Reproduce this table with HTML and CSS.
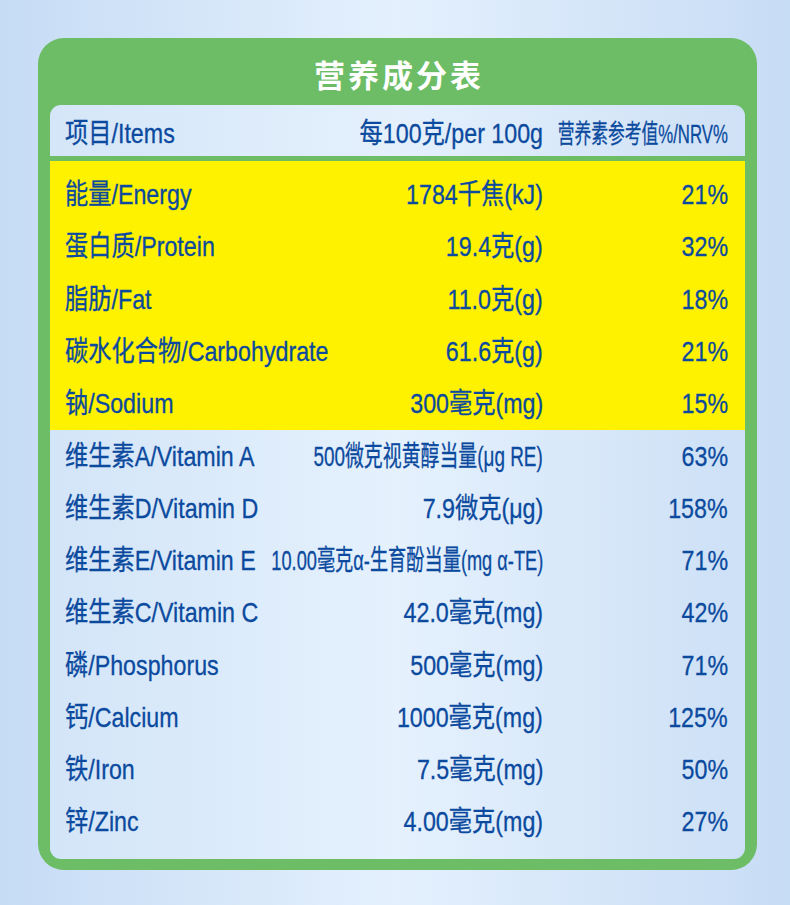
FILE: index.html
```html
<!DOCTYPE html>
<html lang="zh">
<head>
<meta charset="utf-8">
<title>营养成分表</title>
<link rel="stylesheet" href="styles.css">
</head>
<body>
<div class="page">
  <div class="card">
    <div class="title">营养成分表</div>
    <div class="head row">
      <span class="c name">项目/Items</span>
      <span class="c val">每100克/per 100g</span>
      <span class="c nrv narrowhead">营养素参考值%/NRV%</span>
    </div>
    <div class="yellow">
      <div class="row"><span class="c name">能量/Energy</span><span class="c val">1784千焦(kJ)</span><span class="c nrv">21%</span></div>
      <div class="row"><span class="c name">蛋白质/Protein</span><span class="c val">19.4克(g)</span><span class="c nrv">32%</span></div>
      <div class="row"><span class="c name">脂肪/Fat</span><span class="c val">11.0克(g)</span><span class="c nrv">18%</span></div>
      <div class="row"><span class="c name">碳水化合物/Carbohydrate</span><span class="c val">61.6克(g)</span><span class="c nrv">21%</span></div>
      <div class="row"><span class="c name">钠/Sodium</span><span class="c val">300毫克(mg)</span><span class="c nrv">15%</span></div>
    </div>
    <div class="blue">
      <div class="row"><span class="c name">维生素A/Vitamin A</span><span class="c val tight">500微克视黄醇当量(μg RE)</span><span class="c nrv">63%</span></div>
      <div class="row"><span class="c name">维生素D/Vitamin D</span><span class="c val">7.9微克(μg)</span><span class="c nrv">158%</span></div>
      <div class="row"><span class="c name">维生素E/Vitamin E</span><span class="c val tighter">10.00毫克α-生育酚当量(mg α-TE)</span><span class="c nrv">71%</span></div>
      <div class="row"><span class="c name">维生素C/Vitamin C</span><span class="c val">42.0毫克(mg)</span><span class="c nrv">42%</span></div>
      <div class="row"><span class="c name">磷/Phosphorus</span><span class="c val">500毫克(mg)</span><span class="c nrv">71%</span></div>
      <div class="row"><span class="c name">钙/Calcium</span><span class="c val">1000毫克(mg)</span><span class="c nrv">125%</span></div>
      <div class="row"><span class="c name">铁/Iron</span><span class="c val">7.5毫克(mg)</span><span class="c nrv">50%</span></div>
      <div class="row"><span class="c name">锌/Zinc</span><span class="c val">4.00毫克(mg)</span><span class="c nrv">27%</span></div>
    </div>
  </div>
</div>
</body>
</html>
```
FILE: styles.css
```css
html, body {
  margin: 0;
  padding: 0;
}
body {
  width: 790px;
  height: 905px;
  overflow: hidden;
  background: linear-gradient(to right, #c6dcf5 0%, #e4f0fd 50%, #c7dcf5 100%);
  font-family: "Liberation Sans", "Noto Sans CJK SC", sans-serif;
}
.page {
  padding: 38px 0 0 38px;
}
.card {
  width: 719px;
  height: 832px;
  box-sizing: border-box;
  background: #6cbd65;
  border-radius: 26px;
  padding: 0 12px 11px 12px;
  display: flex;
  flex-direction: column;
}
.title {
  height: 67px;
  box-sizing: border-box;
  padding-top: 4px;
  display: flex;
  align-items: center;
  justify-content: center;
  color: #ffffff;
  font-family: "Noto Sans CJK SC", sans-serif;
  font-weight: 700;
  font-size: 31px;
  letter-spacing: 3px;
  text-indent: 3px;
}
.row {
  display: grid;
  grid-template-columns: minmax(0, 1fr) 185px;
  align-items: center;
  padding: 0 17px 0 15px;
  height: 52.2px;
  color: #0b4a9e;
  font-size: 28px;
  line-height: 28px;
  white-space: nowrap;
  -webkit-text-stroke: 0.3px #0b4a9e;
}
.c {
  display: inline-block;
  transform: scaleX(0.83);
}
.name {
  grid-area: 1 / 1;
  justify-self: start;
  transform-origin: left center;
}
.val {
  grid-area: 1 / 1;
  justify-self: end;
  transform-origin: right center;
}
.nrv {
  grid-area: 1 / 2;
  justify-self: end;
  transform-origin: right center;
}
.val.tight {
  transform: scaleX(0.675);
}
.val.tighter {
  transform: scaleX(0.65);
}
.nrv.narrowhead {
  font-size: 26px;
  transform: scaleX(0.645);
}
.head {
  height: 51px;
  box-sizing: border-box;
  padding-top: 15px;
  padding-bottom: 8px;
  align-items: center;
  border-radius: 11px 11px 0 0;
  background: linear-gradient(to right, #d5e6f8 0%, #e4f0fc 50%, #cfe1f6 100%);
}
.yellow {
  margin-top: 5px;
  height: 269px;
  box-sizing: border-box;
  padding-top: 8px;
  background: #fff200;
}
.yellow .row {
  height: 52.25px;
}
.blue {
  flex: 1;
  padding-top: 1px;
  border-radius: 0 0 11px 11px;
  background: linear-gradient(to right, #d3e5f8 0%, #e5f1fd 50%, #cde0f6 100%);
}
.blue .row {
  height: 52.14px;
}
```
